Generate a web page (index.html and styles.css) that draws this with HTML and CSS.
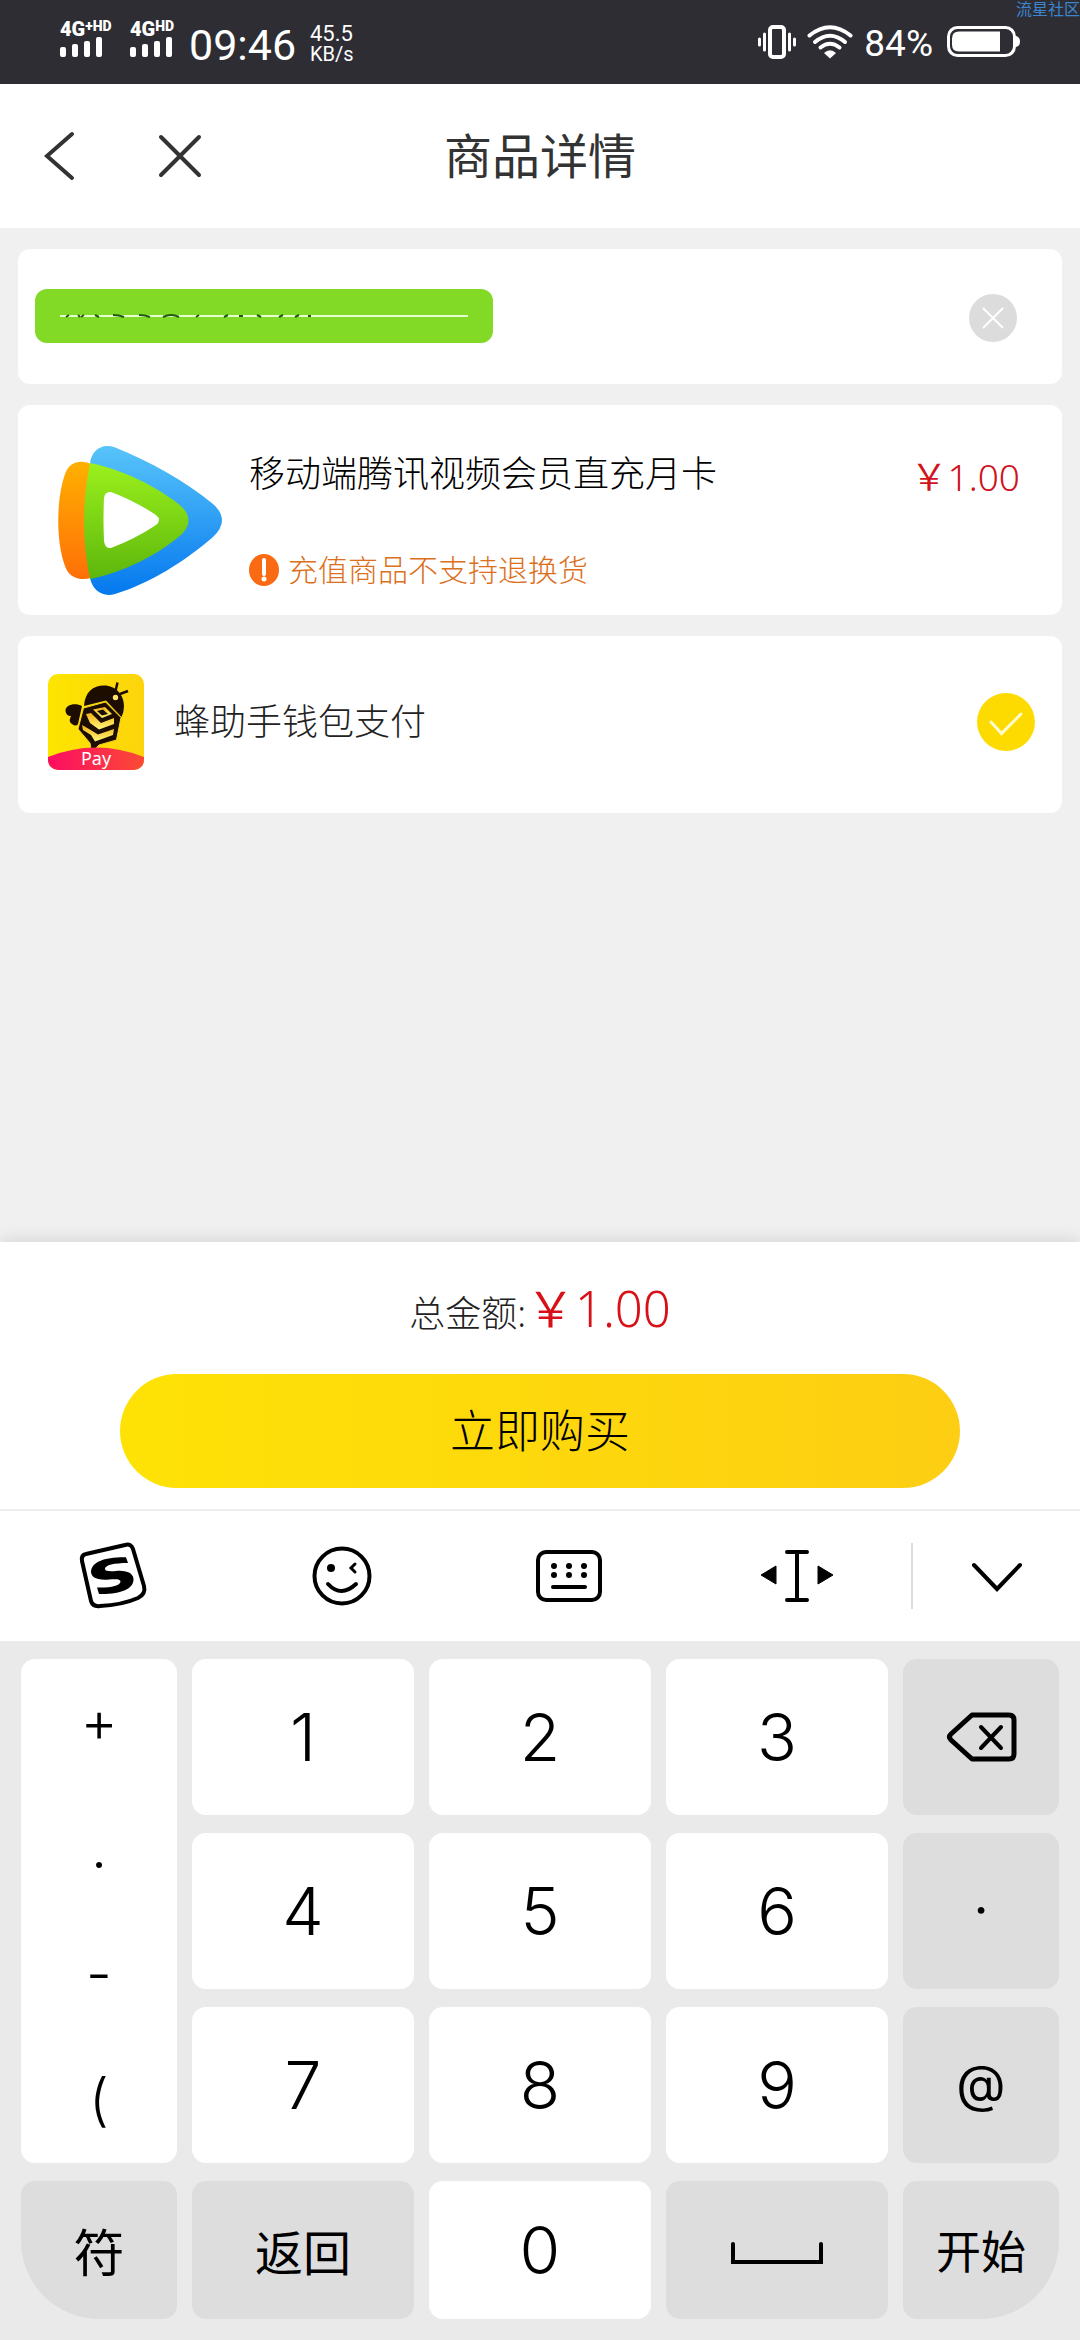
FILE: index.html
```html
<!DOCTYPE html>
<html lang="zh-CN">
<head>
<meta charset="utf-8">
<meta name="viewport" content="width=device-width, initial-scale=1">
<title>商品详情</title>
<link rel="stylesheet" href="styles.css">
</head>
<body>
<div class="status">
  <div class="signal">
    <div class="net">4G<sup>+HD</sup></div>
    <svg width="42" height="20" viewBox="0 0 42 20" fill="#fff"><rect y="10" width="6" height="10" rx="2"/><rect x="12" y="7" width="6" height="13" rx="2"/><rect x="24" y="4" width="6" height="16" rx="2"/><rect x="36" width="6" height="20" rx="2"/></svg>
  </div>
  <div class="signal">
    <div class="net">4G<sup>HD</sup></div>
    <svg width="44" height="20" viewBox="0 0 44 20" fill="#fff"><rect y="10" width="6" height="10" rx="2"/><rect x="12" y="7" width="6" height="13" rx="2"/><rect x="24" y="4" width="6" height="16" rx="2"/><rect x="36" width="6" height="20" rx="2"/></svg>
  </div>
  <div class="clock">09:46</div>
  <div class="speed"><span>45.5</span><span class="unit">KB/s</span></div>
  <div class="status-right">
    <svg width="38" height="34" viewBox="0 0 38 34" fill="none" stroke="#fff"><rect x="12" y="2" width="14" height="30" rx="3" stroke-width="4"/><path d="M6.500 9v16M31.500 9v16" stroke-width="3" stroke-linecap="round"/><path d="M1.500 14v6M36.500 14v6" stroke-width="3" stroke-linecap="round"/></svg>
    <svg width="46" height="34" viewBox="0 0 46 34" fill="none" stroke="#fff" stroke-width="4" stroke-linecap="round"><path d="M2.500 10.500Q23-6 43.500 10.500"/><path d="M8 17Q23 4.500 38 17"/><path d="M13.500 22.500Q23 15 32.500 22.500"/><path d="M17 28Q23 22.500 29 28L23 33.500Z" fill="#fff" stroke="none"/></svg>
    <span class="percent">84%</span>
    <svg width="73" height="32" viewBox="0 0 73 32"><rect x="1.500" y="1.500" width="66" height="28" rx="9" fill="none" stroke="#fff" stroke-width="3"/><path d="M12 5.500H53V25.500H12Q5 25.500 5 18.500V12.500Q5 5.500 12 5.500Z" fill="#fff"/><path d="M69 10q4 1 4 5.500t-4 5.500Z" fill="#fff"/></svg>
  </div>
  <div class="watermark">流星社区</div>
</div>

<header class="header">
  <div class="nav">
    <button class="icon-btn" type="button" aria-label="返回"><svg width="48" height="56" viewBox="0 0 48 56"><path d="M36 6L11 28L36 50"/></svg></button>
    <button class="icon-btn" type="button" aria-label="关闭"><svg width="48" height="56" viewBox="0 0 48 56"><path d="M5 9L43 47M43 9L5 47"/></svg></button>
  </div>
  <h1 class="title">商品详情</h1>
</header>

<main class="content">
  <div class="card account">
    <input class="account-input" type="text" aria-label="充值账号">
    <svg class="mask" viewBox="0 0 458 54"><rect width="458" height="54" rx="12" fill="#82da26"/><path d="M25 27H433" stroke="#e6ffd0" stroke-width="2"/><path d="M31 28l3-2M43 26l2 2M46 28l3-2M60 26l4 2M78 26q6 0 11 2M104 26q6 0 11 2M128 28q8-4 16 0M161 28l3-2M189 28l4-2M204 27h4M222 26l4 2M244 28l4-2M260 28l4-2M273 27h3" stroke="#1f5a10" stroke-width="2" fill="none"/></svg>
    <button class="clear" type="button" aria-label="清除"><svg width="48" height="48" viewBox="0 0 48 48"><circle cx="24" cy="24" r="24" fill="#dcdcdc"/><path d="M14 14L34 34M34 14L14 34" stroke="#fff" stroke-width="2"/></svg></button>
  </div>

  <section class="card product">
    <svg class="logo" width="170" height="160" viewBox="0 0 170 160">
      <defs>
        <linearGradient id="blue" x1="0" y1="0" x2="0" y2="1"><stop offset="0" stop-color="#58c4fa"/><stop offset="1" stop-color="#0478ee"/></linearGradient>
        <linearGradient id="orange" x1="0" y1="0" x2="0" y2="1"><stop offset="0" stop-color="#ffb000"/><stop offset="1" stop-color="#ff6f08"/></linearGradient>
        <linearGradient id="green" x1="0" y1="0" x2="0" y2="1"><stop offset="0" stop-color="#9bf01c"/><stop offset="1" stop-color="#5db60c"/></linearGradient>
      </defs>
      <path fill="url(#blue)" d="M35 24C36 12 45 3 59 7C96 22 130 41 158 64Q176 80 158 97C130 121 96 143 60 154C47 158 37 149 35 138Z"/>
      <path fill="url(#orange)" d="M36 24C25 19 14 22 10 34C1 60 1 102 10 126C14 138 25 141 36 138Z"/>
      <path fill="url(#green)" d="M35 23C66 29 102 46 127 67Q140 80 127 94C102 116 66 133 35 139Q23 82 35 23Z"/>
      <path fill="#fff" d="M49 58Q50 51 56 52Q80 61 101 75Q107 80 101 85Q80 99 56 108Q50 109 49 101Q48 80 49 58Z"/>
    </svg>
    <div class="product-info">
      <div class="product-row"><h2 class="product-name">移动端腾讯视频会员直充月卡</h2><span class="price">￥1.00</span></div>
      <p class="notice"><svg width="30" height="32" viewBox="0 0 30 32"><ellipse cx="15" cy="16" rx="15" ry="16" fill="#f96a12"/><path d="M15 6v14" stroke="#fff" stroke-width="4" stroke-linecap="round"/><circle cx="15" cy="25" r="2.500" fill="#fff"/></svg>充值商品不支持退换货</p>
    </div>
  </section>

  <label class="card wallet">
    <svg width="96" height="96" viewBox="0 0 96 96">
      <defs>
        <linearGradient id="gold" x1="0" y1="0" x2="1" y2="0"><stop offset="0" stop-color="#fde500"/><stop offset="1" stop-color="#fdd40c"/></linearGradient>
        <linearGradient id="ribbon" x1="0" y1="0" x2="1" y2="0"><stop offset="0" stop-color="#fb0d62"/><stop offset="1" stop-color="#fb4a35"/></linearGradient>
        <linearGradient id="stripe" x1="0" y1="0" x2="0" y2="1"><stop offset="0" stop-color="#f3b414"/><stop offset="1" stop-color="#fff57c"/></linearGradient>
        <clipPath id="tile"><rect width="96" height="96" rx="10"/></clipPath>
      </defs>
      <g clip-path="url(#tile)">
        <rect width="96" height="96" fill="url(#gold)"/>
        <path fill="#1c0d00" d="M36 32C37 18 45 11.500 56 11.500C68 11.500 76 21 76 32Q76 38 73.500 43L58 26.500Z"/>
        <path d="M67.500 17L69.500 8.500M72 20L80 17" stroke="#1c0d00" stroke-width="2.500"/>
        <circle cx="67.500" cy="23.500" r="2.700" fill="#ffe36a"/>
        <path fill="#1c0d00" d="M34 32C27 28 17 31 17.500 37Q18 42 23 42Q20 48 24 50Q28 53 30 50Z"/>
        <path fill="#1c0d00" stroke="#f8cf20" d="M35.500 34L57.500 28L73 43.500L68.500 66L51 71L47 75H43L42 69L30 55Z"/>
        <path fill="url(#stripe)" d="M45 35.500L57 33L64 40L54 44Z"/>
        <path fill="#1c0d00" d="M49 37L55 35.500L60 40L54 41.500Z"/>
        <path fill="url(#stripe)" d="M38 40L43 39L53 49L66 44V50L51 55.500L42 49Z"/>
        <path fill="url(#stripe)" d="M34 51L41 55L50 60.500L66 55L65 61L47 67.500L43 61L35 56Z"/>
        <path fill="url(#ribbon)" d="M0 83Q48 64 96 83V96H0Z"/>
        <text x="48" y="91" class="pay">Pay</text>
      </g>
    </svg>
    <span class="wallet-name">蜂助手钱包支付</span>
    <span class="choice">
      <input class="choice-input" type="radio" name="pay" checked>
      <svg class="choice-mark" viewBox="0 0 58 58"><path d="M14 29L24.500 40.500L44 21" fill="none" stroke="#fffbd0" stroke-width="3" stroke-linecap="round"/></svg>
    </span>
  </label>
</main>

<footer class="checkout">
  <div class="total"><span>总金额:</span><span class="total-price">￥1.00</span></div>
  <button class="buy" type="button">立即购买</button>
</footer>

<div class="keyboard">
  <div class="tools">
    <button class="tool" type="button" aria-label="输入法"><svg width="76" height="72" viewBox="0 0 76 72"><path d="M6 21Q5 15 10 14L49 5Q55 3 57 9L68 46Q70 54 62 58Q46 65 24 66Q17 67 15 61Z" fill="none" stroke="#000" stroke-width="4"/><path d="M50 17.300L52 23C38 23 29 25 29 29C29 31 33 31.500 40 31C52 30 58 34 57.500 40C57 49 45 54.500 23 54L21 47.500C34 48 44 46 44.500 41.500C44.500 39 40 39 33 39.500C20 40.500 15 37 15 31.500C16 22 28 17 50 17.300Z"/></svg></button>
    <button class="tool" type="button" aria-label="表情"><svg width="60" height="60" viewBox="0 0 60 60" fill="none" stroke="#000" stroke-width="4" stroke-linecap="round"><circle cx="30" cy="30" r="27.500"/><circle cx="19" cy="22" r="4" fill="#000" stroke="none"/><path d="M43 18L39 22L43 26" stroke-width="3"/><path d="M16 38Q29 52 44 38"/></svg></button>
    <button class="tool" type="button" aria-label="键盘"><svg width="66" height="54" viewBox="0 0 66 54"><rect x="2" y="3" width="62" height="48" rx="8" fill="none" stroke="#000" stroke-width="4"/><g><circle cx="18" cy="17" r="3"/><circle cx="33" cy="17" r="3"/><circle cx="48" cy="17" r="3"/><circle cx="18" cy="26" r="3"/><circle cx="33" cy="26" r="3"/><circle cx="48" cy="26" r="3"/></g><path d="M17 38H49" stroke="#000" stroke-width="4" stroke-linecap="round"/></svg></button>
    <button class="tool" type="button" aria-label="移动光标"><svg width="76" height="54" viewBox="0 0 76 54"><path d="M28 3H48M28 51H48M38 3V51" stroke="#000" stroke-width="4" stroke-linecap="round"/><path d="M17 17V35L2 26ZM59 17V35L74 26Z" stroke="#000" stroke-linejoin="round"/></svg></button>
    <button class="tool tool-hide" type="button" aria-label="收起键盘"><svg width="52" height="32" viewBox="0 0 52 32"><path d="M3 5L26 29L49 5" fill="none" stroke="#000" stroke-width="4" stroke-linecap="round"/></svg></button>
  </div>
  <div class="keys">
    <div class="symbols">
      <button class="symbol" type="button">+</button>
      <button class="symbol" type="button">.</button>
      <button class="symbol" type="button">-</button>
      <button class="symbol" type="button">(</button>
    </div>
    <button class="key" type="button">1</button>
    <button class="key" type="button">2</button>
    <button class="key" type="button">3</button>
    <button class="key gray" type="button" aria-label="删除"><svg width="72" height="54" viewBox="0 0 72 54" fill="none" stroke="#000" stroke-linecap="round" stroke-linejoin="round"><path d="M27 5H64Q69 5 69 10V44Q69 49 64 49H27L6 30Q3 27 6 24Z" stroke-width="5"/><path d="M36 17L56 38M56 17L36 38" stroke-width="4"/></svg></button>
    <button class="key" type="button">4</button>
    <button class="key" type="button">5</button>
    <button class="key" type="button">6</button>
    <button class="key gray mark" type="button">·</button>
    <button class="key" type="button">7</button>
    <button class="key" type="button">8</button>
    <button class="key" type="button">9</button>
    <button class="key gray mark" type="button">@</button>
    <button class="key gray sign" type="button">符</button>
    <button class="key gray word" type="button">返回</button>
    <button class="key" type="button">0</button>
    <button class="key gray" type="button" aria-label="空格"><svg width="92" height="30" viewBox="0 0 92 30"><path d="M2 9V27H90V9" fill="none" stroke="#000" stroke-width="4" stroke-linecap="round"/></svg></button>
    <button class="key gray start" type="button">开始</button>
  </div>
</div>
</body>
</html>
```
FILE: styles.css
```css
* { box-sizing: border-box; }

body {
  margin: 0;
  min-height: 100vh;
  display: flex;
  flex-direction: column;
  background: #f0f0f0;
  color: #222;
  font-family: "Noto Sans", "Noto Sans CJK SC", sans-serif;
  font-weight: 300;
  overflow-x: hidden;
}

h1, h2, p { margin: 0; font-weight: inherit; }

svg { display: block; flex: none; }

button {
  border: 0;
  padding: 0;
  background: none;
  color: #000;
  font: inherit;
}

/* status bar */
.status {
  position: relative;
  display: flex;
  align-items: center;
  height: 84px;
  padding: 0 60px;
  background: #2e2d34;
  color: #fff;
  font-family: Roboto, sans-serif;
  font-weight: 400;
}

.signal { width: 70px; padding-bottom: 6px; }

.signal + .signal { width: 59px; }

.net {
  display: flex;
  height: 16px;
  font-size: 20px;
  line-height: 16px;
  font-weight: 900;
}

.net sup { font-size: 14px; line-height: 10px; }

.clock { width: 121px; padding-top: 6px; font-size: 43px; line-height: 48px; }

.speed { display: flex; flex-direction: column; padding-top: 3px; font-size: 22px; line-height: 20px; }

.unit { font-size: 20px; }

.status-right { display: flex; align-items: center; gap: 11px; margin-left: auto; }

.percent { font-size: 37px; line-height: 42px; padding: 3px 3px 0 0; }

.watermark {
  position: absolute;
  top: 0;
  right: 0;
  color: #3b86d0;
  font: 400 16px/16px "Noto Sans CJK SC", sans-serif;
}

/* page header */
.header {
  display: grid;
  grid-template-columns: 1fr auto 1fr;
  align-items: center;
  height: 144px;
  padding: 0 36px;
  background: #fff;
}

.nav { display: flex; gap: 72px; }

.icon-btn svg { fill: none; stroke: #333; stroke-width: 4; stroke-linecap: round; }

.title { color: #333; font-size: 48px; line-height: 60px; font-weight: 400; }

/* cards */
.content {
  flex: 1;
  display: flex;
  flex-direction: column;
  gap: 21px;
  padding: 21px 18px;
}

.card { display: flex; align-items: center; border-radius: 12px; background: #fff; }

.account { position: relative; min-height: 135px; padding: 3px 45px 0 42px; }

.account-input {
  flex: 1;
  min-width: 0;
  height: 60px;
  border: 0;
  outline: 0;
  background: none;
  font: inherit;
  font-size: 36px;
}

.mask { position: absolute; left: 17px; top: 40px; width: 458px; height: 54px; }

.product { min-height: 210px; padding: 20px 42px 0 37px; }

.product-info {
  flex: 1;
  display: flex;
  flex-direction: column;
  gap: 45px;
  padding-left: 24px;
}

.product-row { display: flex; justify-content: space-between; }

.product-name { color: #000; font-size: 36px; line-height: 48px; }

.price { color: #d0121b; font-size: 37px; line-height: 54px; font-weight: 350; }

.notice {
  display: flex;
  align-items: center;
  gap: 9px;
  color: #dc6f1c;
  font-size: 30px;
  line-height: 42px;
}

.wallet { min-height: 177px; padding: 0 27px 6px 30px; }

.pay { fill: #fff; font-size: 18px; font-weight: 400; text-anchor: middle; }

.wallet-name { flex: 1; padding-left: 30px; font-size: 36px; line-height: 54px; }

.choice { display: grid; }

.choice-input, .choice-mark { grid-area: 1 / 1; width: 58px; height: 58px; margin: 0; }

.choice-input { appearance: none; border-radius: 50%; background: #fedb00; }

.choice-mark { position: relative; pointer-events: none; }

/* checkout */
.checkout {
  padding: 33px 120px 21px;
  background: #fff;
  box-shadow: 0 -3px 15px rgba(0, 0, 0, 0.1);
}

.total {
  display: flex;
  justify-content: center;
  align-items: baseline;
  height: 99px;
  font-size: 36px;
  line-height: 66px;
}

.total-price { color: #d81118; font-size: 49px; font-weight: 350; }

.buy {
  width: 100%;
  height: 114px;
  border-radius: 57px;
  background: linear-gradient(90deg, #fee205, #fdce13);
  font-size: 45px;
  line-height: 60px;
}

/* keyboard */
.keyboard {
  background: #eaeaea;
  font-family: Inter, "Noto Sans CJK SC", sans-serif;
  font-weight: 400;
}

.tools {
  display: grid;
  grid-template-columns: repeat(4, 1fr) 169px;
  align-items: center;
  height: 132px;
  border-top: 2px solid #eee;
  background: #fff;
}

.tool { display: flex; justify-content: center; align-items: center; height: 66px; }

.tool-hide { border-left: 2px solid #dcdcdc; }

.keys {
  display: grid;
  grid-template-columns: 156fr 222fr 222fr 222fr 156fr;
  grid-template-rows: repeat(3, 156px) 138px;
  gap: 18px 15px;
  padding: 18px 21px 21px;
}

.symbols {
  grid-row: span 3;
  display: grid;
  grid-template-rows: repeat(4, 1fr);
  border-radius: 14px;
  background: #fff;
}

.symbol { font-size: 57px; line-height: 60px; font-weight: 350; }

.key {
  display: flex;
  align-items: center;
  justify-content: center;
  border-radius: 14px;
  background: #fff;
  font-size: 66px;
  line-height: 72px;
  font-weight: 350;
}

.gray { background: #ddd; }

.mark { padding-bottom: 3px; font-size: 51px; font-weight: 400; }

.sign, .word, .start { font-family: "Noto Sans CJK SC", sans-serif; font-weight: 400; }

.sign { border-bottom-left-radius: 78px; font-size: 51px; }

.word { font-size: 48px; }

.start { border-bottom-right-radius: 78px; font-size: 45px; }
```
